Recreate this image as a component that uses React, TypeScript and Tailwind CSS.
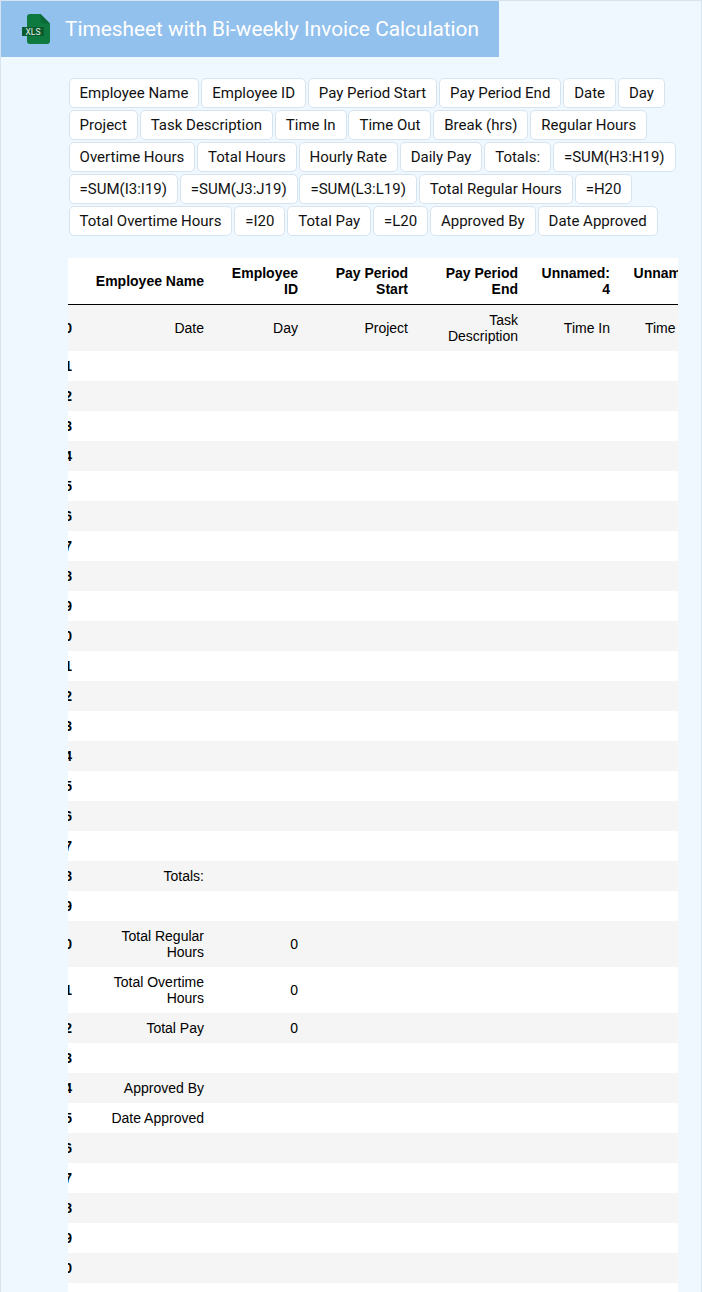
const chips = [
  "Employee Name", "Employee ID", "Pay Period Start", "Pay Period End", "Date", "Day",
  "Project", "Task Description", "Time In", "Time Out", "Break (hrs)", "Regular Hours",
  "Overtime Hours", "Total Hours", "Hourly Rate", "Daily Pay", "Totals:", "=SUM(H3:H19)",
  "=SUM(I3:I19)", "=SUM(J3:J19)", "=SUM(L3:L19)", "Total Regular Hours", "=H20",
  "Total Overtime Hours", "=I20", "Total Pay", "=L20", "Approved By", "Date Approved",
];

const headers = ["Employee Name", "Employee ID", "Pay Period Start", "Pay Period End", "Unnamed: 4", "Unnamed: 5"];
const firstRow = ["Date", "Day", "Project", "Task Description", "Time In", "Time Out"];

const labelled: Record<number, [string, string]> = {
  18: ["Totals:", ""],
  20: ["Total Regular Hours", "0"],
  21: ["Total Overtime Hours", "0"],
  22: ["Total Pay", "0"],
  24: ["Approved By", ""],
  25: ["Date Approved", ""],
};

const rowIndexes = Array.from({ length: 32 }, (_, i) => i);

function XlsIcon() {
  return (
    <svg width="30" height="32" viewBox="0 0 30 32" className="shrink-0">
      <path d="M9 1h10.5L29 10.5V28a3 3 0 0 1-3 3H9a3 3 0 0 1-3-3V4a3 3 0 0 1 3-3z" fill="#0e7a40" />
      <path d="M19.5 1L29 10.5h-7a2.5 2.5 0 0 1-2.5-2.5z" fill="#0b6a36" />
      <rect x="1" y="14" width="22" height="9" fill="#0a5c30" />
      <text x="12" y="21.7" textAnchor="middle" fontSize="8.5" fill="#e4f2ea" fontFamily="Roboto, sans-serif">
        XLS
      </text>
    </svg>
  );
}

export default function App() {
  return (
    <div className="h-[1292px] overflow-hidden bg-[#f0f8ff] border border-b-0 border-[#d6e4f0] font-['Roboto',sans-serif]">
      <div className="flex items-center gap-[14px] w-[498px] h-14 bg-[#93c1ed] pl-5">
        <XlsIcon />
        <h1 className="text-[20.8px] leading-7 text-white font-normal">Timesheet with Bi-weekly Invoice Calculation</h1>
      </div>

      <div className="ml-[67.6px] mr-5 mt-[21px] flex flex-wrap gap-x-[1.85px] gap-y-0.5">
        {chips.map((c) => (
          <span
            key={c}
            className="h-[30px] px-2.5 leading-[28px] text-[15px] text-[#111] bg-white border border-[#d6e4f0] rounded-[5px]"
          >
            {c}
          </span>
        ))}
      </div>

      <div className="ml-[67px] mt-[22px] w-[610px] overflow-hidden bg-white">
        <table className="-ml-[26px] w-[670px] table-fixed border-collapse font-['Liberation_Sans',Arial,sans-serif] text-sm leading-4 text-black">
          <colgroup>
            <col className="w-10" />
            <col className="w-[132px]" />
            <col className="w-[94px]" />
            <col className="w-[110px]" />
            <col className="w-[110px]" />
            <col className="w-[92px]" />
            <col className="w-[92px]" />
          </colgroup>
          <thead>
            <tr className="border-b border-black">
              <th className="px-2.5 py-[7px]"></th>
              {headers.map((h) => (
                <th key={h} className="px-2.5 py-[7px] text-right font-bold">
                  {h}
                </th>
              ))}
            </tr>
          </thead>
          <tbody>
            {rowIndexes.map((i) => {
              const row = labelled[i];
              const cells = i === 0 ? firstRow : [row?.[0] ?? "", row?.[1] ?? "", "", "", "", ""];
              return (
                <tr key={i} className={i % 2 === 0 ? "bg-[#f5f5f5]" : "bg-white"}>
                  <th className="px-2.5 py-[7px] text-right font-bold">{i}</th>
                  {cells.map((c, j) => (
                    <td key={j} className="px-2.5 py-[7px] text-right">
                      {c || "\u00a0"}
                    </td>
                  ))}
                </tr>
              );
            })}
          </tbody>
        </table>
      </div>
    </div>
  );
}
